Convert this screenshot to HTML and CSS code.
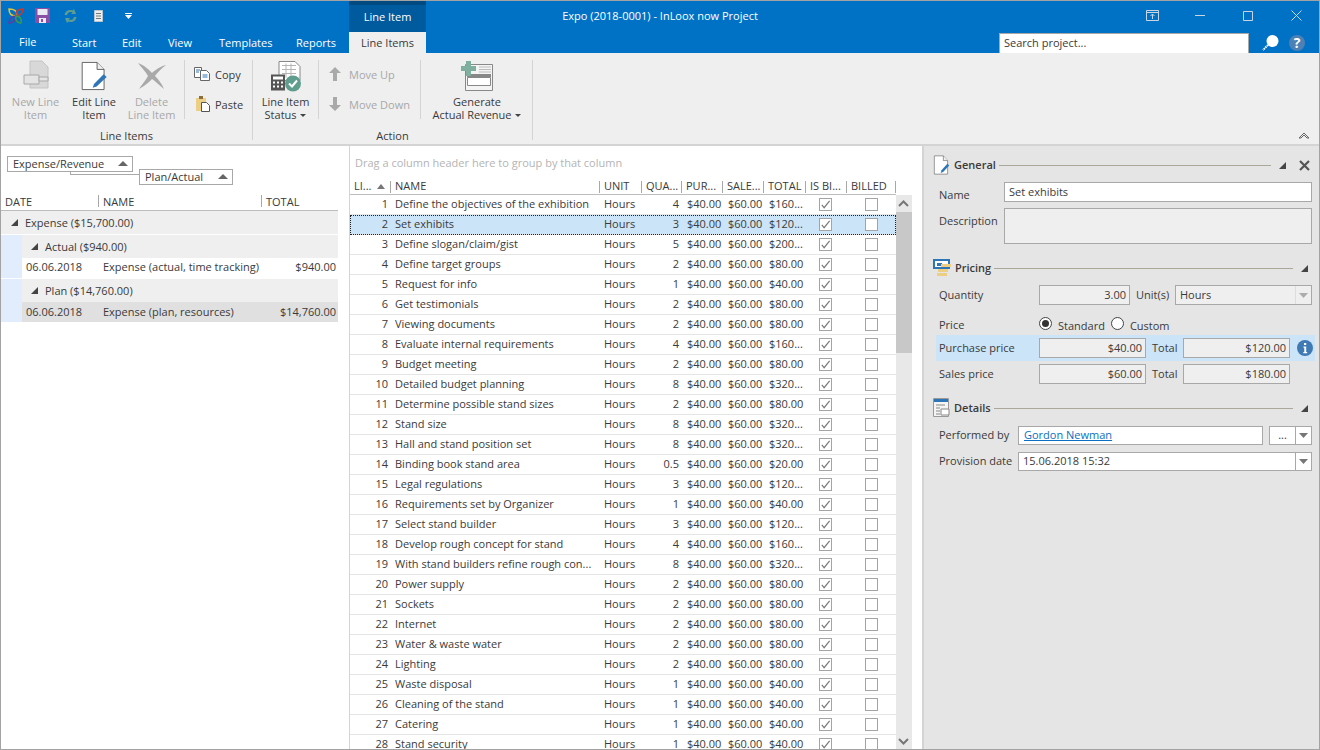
FILE: index.html
```html
<!DOCTYPE html>
<html lang="en">
<head>
<meta charset="utf-8">
<title>Expo (2018-0001) - InLoox now Project</title>
<link rel="stylesheet" href="styles.css">
</head>
<body>
<svg class="defs" width="0" height="0" aria-hidden="true">
  <symbol id="chk" viewBox="0 0 12 12"><path d="M2 6.500l2.500 3L10.500 2" fill="none" stroke="#7a7a7a" stroke-width="1.300"/></symbol>
  <symbol id="tri" viewBox="0 0 7 7"><path d="M7 0v7H0z" fill="#444"/></symbol>
  <symbol id="drop" viewBox="0 0 9 5"><path d="M0 0h9L4.500 5z" fill="#777"/></symbol>
  <symbol id="pageedit" viewBox="0 0 32 34"><path d="M2.500 1.500h17l8 8v23h-25z" fill="#fff" stroke="#555"/><path d="M19.500 1.500v8h8" fill="#eee" stroke="#555"/><path d="M16 26l11-11 3.500 3L19 29l-4.500 1.500z" fill="#2e75b6"/></symbol>
</svg>
<div class="app">
  <header class="chrome">
    <div class="titlerow">
      <div class="qat">
        <svg width="16" height="16" viewBox="0 0 16 16"><path d="M1 1c5 0 9 2 7 7C3 8 1 5 1 1z" fill="none" stroke="#e2c33a" stroke-width="1.500"/><path d="M15 1c-4 0-8 2-7 7 4 0 7-3 7-7z" fill="none" stroke="#c9372c" stroke-width="1.500"/><path d="M1 15c0-4 3-7 7-7 0 4-3 7-7 7z" fill="none" stroke="#5a3f9e" stroke-width="1.500"/><path d="M13 15c-4 0-6-3-5-7 4 0 6 3 5 7z" fill="none" stroke="#3c9a48" stroke-width="1.500"/></svg>
        <svg width="15" height="15" viewBox="0 0 15 15"><path d="M0 0h15v15H0z" fill="#8a4fa5"/><path d="M2.500 1h10v6h-10z" fill="#e9e9f2"/><path d="M4 10h7v5H4z" fill="#e9e9f2"/><path d="M6 11h2v3H6z" fill="#8a4fa5"/></svg>
        <svg width="15" height="16" viewBox="0 0 15 16"><path d="M1.500 7C2 3 6 1 9.500 2.500L11 1l2 5H8l1.500-1.500C7 3.500 4.500 4.500 4 7zM13.500 9c-.5 4-4.500 6-8 4.500L4 15l-2-5h5l-1.500 1.500c2.500 1 5 0 5.500-2.500z" fill="#5f9e8f"/></svg>
        <svg width="17" height="16" viewBox="0 0 17 16"><path d="M4.500 2.500h8v11h-8z" fill="#eee" stroke="#b9c6d2"/><path d="M6 5.500h5M6 8h5M6 10.500h5" stroke="#777"/></svg>
        <svg class="qatmenu" width="7" height="6" viewBox="0 0 7 6"><path d="M0 0h7v1H0zM0 2h7L3.500 6z" fill="#fff"/></svg>
      </div>
      <div class="ctx"><span>Line Item</span></div>
      <div class="title">Expo (2018-0001) - InLoox now Project</div>
      <div class="winbtns">
        <svg width="13" height="11" viewBox="0 0 13 11"><path d="M.5.500h12v10H.5zM.5 2.500h12M6.500 9V4M4.500 6l2-2 2 2" fill="none" stroke="#c9d6e2"/></svg>
        <svg width="10" height="1" viewBox="0 0 10 1"><path d="M0 .5h10" stroke="#c9d6e2"/></svg>
        <svg width="10" height="10" viewBox="0 0 10 10"><path d="M.5.500h9v9h-9z" fill="none" stroke="#c9d6e2"/></svg>
        <svg width="11" height="11" viewBox="0 0 11 11"><path d="M.5.500l10 10M10.500.500l-10 10" stroke="#c9d6e2"/></svg>
      </div>
    </div>
    <nav class="tabrow">
      <span class="tab file">File</span>
      <span class="tab start">Start</span>
      <span class="tab edit">Edit</span>
      <span class="tab view">View</span>
      <span class="tab templates">Templates</span>
      <span class="tab reports">Reports</span>
      <span class="tab active">Line Items</span>
      <div class="search">Search project...</div>
      <svg class="srchicon" width="17" height="17" viewBox="0 0 17 17"><circle cx="10.500" cy="7" r="6" fill="#fff"/><path d="M6 11l-5 5" stroke="#fff" stroke-width="2" stroke-dasharray="1.500 .7"/></svg>
      <span class="help">?</span>
    </nav>
  </header>

  <section class="ribbon">
    <div class="rgroup g1">
      <div class="rbody">
        <div class="bigbtn w-new dis">
          <svg width="26" height="32" viewBox="0 0 26 32"><path d="M7 1h12l6 6v21H7z" fill="#d8d8d8" stroke="#c4c4c4"/><path d="M1 15h15v9H1z" fill="#e4e4e4" stroke="#a8a8a8"/><path d="M16 17h9v4h-9z" fill="#e4e4e4" stroke="#a8a8a8"/></svg>
          <span>New Line<br>Item</span>
        </div>
        <div class="bigbtn w-edit">
          <svg width="28" height="32" viewBox="0 0 32 34"><use href="#pageedit"/></svg>
          <span>Edit Line<br>Item</span>
        </div>
        <div class="bigbtn w-del dis">
          <svg width="30" height="30" viewBox="0 0 30 30"><path d="M1 2c8 3 12 8 14 10C18 9 24 5 29 4c-4 3-9 8-11 11 3 3 7 8 9 13-5-4-9-8-12-10-3 3-7 7-13 10 3-5 7-9 9-13C9 11 4 6 1 2z" fill="#a9a9a9"/></svg>
          <span>Delete<br>Line Item</span>
        </div>
        <div class="rsep first"></div>
        <div class="smallcol copycol">
          <div class="smallbtn">
            <svg width="16" height="14" viewBox="0 0 16 14"><path d="M.5.500h7v10h-7z" fill="#fff" stroke="#666"/><path d="M6.500 3.500h6l3 3v7h-9z" fill="#fff" stroke="#666"/><path d="M8.500 8h5M8.500 10h5" stroke="#2e75b6"/><path d="M2 3h4M2 5h3" stroke="#2e75b6"/></svg>
            <span>Copy</span>
          </div>
          <div class="smallbtn">
            <svg width="14" height="16" viewBox="0 0 14 16" class="pasteicon"><path d="M0 2h10v13H0z" fill="#eccf85"/><path d="M3 0h4v3H3z" fill="#8a6e3c"/><path d="M5.500 6.500h5l3 3v6h-8z" fill="#fff" stroke="#555"/></svg>
            <span>Paste</span>
          </div>
        </div>
      </div>
      <div class="rlabel">Line Items</div>
    </div>
    <div class="rgroup g2">
      <div class="rbody">
        <div class="bigbtn w-status">
          <svg width="32" height="31" viewBox="0 0 32 31"><path d="M9 1h16l5 5v14H9z" fill="#fff" stroke="#888"/><path d="M12 5h14M12 9h14M12 13h14M16 3v14M21 3v14" stroke="#b5b5b5"/><path d="M1 14h14v16H1z" fill="#555"/><path d="M3 16h10v3H3z" fill="#fff"/><path d="M3 21h2v2H3zm4 0h2v2H7zm4 0h2v2h-2zM3 25h2v2H3zm4 0h2v2H7zm4 0h2v2h-2z" fill="#fff"/><circle cx="23" cy="23" r="8" fill="#5f9e8f"/><path d="M19 23l3 3 5-6" fill="none" stroke="#fff" stroke-width="2"/></svg>
          <span>Line Item<br>Status <i class="caret"></i></span>
        </div>
        <div class="rsep second"></div>
        <div class="smallcol movecol dis">
          <div class="smallbtn">
            <svg width="12" height="14" viewBox="0 0 12 14"><path d="M6 0l6 6H8v8H4V6H0z" fill="#a9a9a9"/></svg>
            <span>Move Up</span>
          </div>
          <div class="smallbtn">
            <svg width="12" height="14" viewBox="0 0 12 14"><path d="M6 14L0 8h4V0h4v8h4z" fill="#a9a9a9"/></svg>
            <span>Move Down</span>
          </div>
        </div>
        <div class="rsep third"></div>
        <div class="bigbtn w-gen">
          <svg width="32" height="30" viewBox="0 0 32 30"><path d="M4.500 3.500h27v26h-27z" fill="#f4f4f4" stroke="#888"/><path d="M6 13h24v3H6z" fill="#888"/><path d="M6.500 16.500h23v8h-23z" fill="#fff" stroke="#888"/><path d="M18 6h12M18 8.500h12M18 11h12" stroke="#bbb"/><path d="M5 0h5v5h5v5h-5v5H5v-5H0V5h5z" fill="#7fb09f"/></svg>
          <span>Generate<br>Actual Revenue <i class="caret"></i></span>
        </div>
      </div>
      <div class="rlabel">Action</div>
    </div>
    <svg class="collapse" width="12" height="8" viewBox="0 0 12 8"><path d="M1 7l5-5 5 5-2 0-3-3-3 3z" fill="none" stroke="#666"/></svg>
  </section>

  <main class="work">
    <aside class="left">
      <div class="groupbox">
        <div class="chip c1">Expense/Revenue<i class="up"></i></div>
        <div class="chip c2">Plan/Actual<i class="up"></i></div>
        <div class="link"></div>
      </div>
      <div class="lhead">
        <span class="ld">DATE</span><span class="ln">NAME</span><span class="lt">TOTAL</span>
      </div>
      <div class="lgroup top"><svg width="7" height="7"><use href="#tri"/></svg>Expense ($15,700.00)</div>
      <div class="nest">
        <div class="lgroup sub"><svg width="7" height="7"><use href="#tri"/></svg>Actual ($940.00)</div>
        <div class="lrow"><span class="ld">06.06.2018</span><span class="ln">Expense (actual, time tracking)</span><span class="lt">$940.00</span></div>
      </div>
      <div class="nest second">
        <div class="lgroup sub"><svg width="7" height="7"><use href="#tri"/></svg>Plan ($14,760.00)</div>
        <div class="lrow sel"><span class="ld">06.06.2018</span><span class="ln">Expense (plan, resources)</span><span class="lt">$14,760.00</span></div>
      </div>
    </aside>

    <section class="center">
      <div class="draghint">Drag a column header here to group by that column</div>
      <div class="ghead">
        <span class="cell">LI...<i class="up"></i></span><span class="cell">NAME</span><span class="cell">UNIT</span><span class="cell">QUA...</span><span class="cell">PUR...</span><span class="cell">SALE...</span><span class="cell">TOTAL</span><span class="cell">IS BI...</span><span class="cell">BILLED</span>
      </div>
      <div class="gbody">
        <div class="rows">
          <div class="row"><span class="n">1</span><span>Define the objectives of the exhibition</span><span>Hours</span><span class="r">4</span><span class="m">$40.00</span><span class="m">$60.00</span><span class="m">$160...</span><span class="ck a"><b><svg><use href="#chk"/></svg></b></span><span class="ck z"><b></b></span></div>
          <div class="row cur"><span class="n">2</span><span>Set exhibits</span><span>Hours</span><span class="r">3</span><span class="m">$40.00</span><span class="m">$60.00</span><span class="m">$120...</span><span class="ck a"><b><svg><use href="#chk"/></svg></b></span><span class="ck z"><b></b></span></div>
          <div class="row"><span class="n">3</span><span>Define slogan/claim/gist</span><span>Hours</span><span class="r">5</span><span class="m">$40.00</span><span class="m">$60.00</span><span class="m">$200...</span><span class="ck a"><b><svg><use href="#chk"/></svg></b></span><span class="ck z"><b></b></span></div>
          <div class="row"><span class="n">4</span><span>Define target groups</span><span>Hours</span><span class="r">2</span><span class="m">$40.00</span><span class="m">$60.00</span><span class="m">$80.00</span><span class="ck a"><b><svg><use href="#chk"/></svg></b></span><span class="ck z"><b></b></span></div>
          <div class="row"><span class="n">5</span><span>Request for info</span><span>Hours</span><span class="r">1</span><span class="m">$40.00</span><span class="m">$60.00</span><span class="m">$40.00</span><span class="ck a"><b><svg><use href="#chk"/></svg></b></span><span class="ck z"><b></b></span></div>
          <div class="row"><span class="n">6</span><span>Get testimonials</span><span>Hours</span><span class="r">2</span><span class="m">$40.00</span><span class="m">$60.00</span><span class="m">$80.00</span><span class="ck a"><b><svg><use href="#chk"/></svg></b></span><span class="ck z"><b></b></span></div>
          <div class="row"><span class="n">7</span><span>Viewing documents</span><span>Hours</span><span class="r">2</span><span class="m">$40.00</span><span class="m">$60.00</span><span class="m">$80.00</span><span class="ck a"><b><svg><use href="#chk"/></svg></b></span><span class="ck z"><b></b></span></div>
          <div class="row"><span class="n">8</span><span>Evaluate internal requirements</span><span>Hours</span><span class="r">4</span><span class="m">$40.00</span><span class="m">$60.00</span><span class="m">$160...</span><span class="ck a"><b><svg><use href="#chk"/></svg></b></span><span class="ck z"><b></b></span></div>
          <div class="row"><span class="n">9</span><span>Budget meeting</span><span>Hours</span><span class="r">2</span><span class="m">$40.00</span><span class="m">$60.00</span><span class="m">$80.00</span><span class="ck a"><b><svg><use href="#chk"/></svg></b></span><span class="ck z"><b></b></span></div>
          <div class="row"><span class="n">10</span><span>Detailed budget planning</span><span>Hours</span><span class="r">8</span><span class="m">$40.00</span><span class="m">$60.00</span><span class="m">$320...</span><span class="ck a"><b><svg><use href="#chk"/></svg></b></span><span class="ck z"><b></b></span></div>
          <div class="row"><span class="n">11</span><span>Determine possible stand sizes</span><span>Hours</span><span class="r">2</span><span class="m">$40.00</span><span class="m">$60.00</span><span class="m">$80.00</span><span class="ck a"><b><svg><use href="#chk"/></svg></b></span><span class="ck z"><b></b></span></div>
          <div class="row"><span class="n">12</span><span>Stand size</span><span>Hours</span><span class="r">8</span><span class="m">$40.00</span><span class="m">$60.00</span><span class="m">$320...</span><span class="ck a"><b><svg><use href="#chk"/></svg></b></span><span class="ck z"><b></b></span></div>
          <div class="row"><span class="n">13</span><span>Hall and stand position set</span><span>Hours</span><span class="r">8</span><span class="m">$40.00</span><span class="m">$60.00</span><span class="m">$320...</span><span class="ck a"><b><svg><use href="#chk"/></svg></b></span><span class="ck z"><b></b></span></div>
          <div class="row"><span class="n">14</span><span>Binding book stand area</span><span>Hours</span><span class="r">0.5</span><span class="m">$40.00</span><span class="m">$60.00</span><span class="m">$20.00</span><span class="ck a"><b><svg><use href="#chk"/></svg></b></span><span class="ck z"><b></b></span></div>
          <div class="row"><span class="n">15</span><span>Legal regulations</span><span>Hours</span><span class="r">3</span><span class="m">$40.00</span><span class="m">$60.00</span><span class="m">$120...</span><span class="ck a"><b><svg><use href="#chk"/></svg></b></span><span class="ck z"><b></b></span></div>
          <div class="row"><span class="n">16</span><span>Requirements set by Organizer</span><span>Hours</span><span class="r">1</span><span class="m">$40.00</span><span class="m">$60.00</span><span class="m">$40.00</span><span class="ck a"><b><svg><use href="#chk"/></svg></b></span><span class="ck z"><b></b></span></div>
          <div class="row"><span class="n">17</span><span>Select stand builder</span><span>Hours</span><span class="r">3</span><span class="m">$40.00</span><span class="m">$60.00</span><span class="m">$120...</span><span class="ck a"><b><svg><use href="#chk"/></svg></b></span><span class="ck z"><b></b></span></div>
          <div class="row"><span class="n">18</span><span>Develop rough concept for stand</span><span>Hours</span><span class="r">4</span><span class="m">$40.00</span><span class="m">$60.00</span><span class="m">$160...</span><span class="ck a"><b><svg><use href="#chk"/></svg></b></span><span class="ck z"><b></b></span></div>
          <div class="row"><span class="n">19</span><span>With stand builders refine rough con...</span><span>Hours</span><span class="r">8</span><span class="m">$40.00</span><span class="m">$60.00</span><span class="m">$320...</span><span class="ck a"><b><svg><use href="#chk"/></svg></b></span><span class="ck z"><b></b></span></div>
          <div class="row"><span class="n">20</span><span>Power supply</span><span>Hours</span><span class="r">2</span><span class="m">$40.00</span><span class="m">$60.00</span><span class="m">$80.00</span><span class="ck a"><b><svg><use href="#chk"/></svg></b></span><span class="ck z"><b></b></span></div>
          <div class="row"><span class="n">21</span><span>Sockets</span><span>Hours</span><span class="r">2</span><span class="m">$40.00</span><span class="m">$60.00</span><span class="m">$80.00</span><span class="ck a"><b><svg><use href="#chk"/></svg></b></span><span class="ck z"><b></b></span></div>
          <div class="row"><span class="n">22</span><span>Internet</span><span>Hours</span><span class="r">2</span><span class="m">$40.00</span><span class="m">$60.00</span><span class="m">$80.00</span><span class="ck a"><b><svg><use href="#chk"/></svg></b></span><span class="ck z"><b></b></span></div>
          <div class="row"><span class="n">23</span><span>Water &amp; waste water</span><span>Hours</span><span class="r">2</span><span class="m">$40.00</span><span class="m">$60.00</span><span class="m">$80.00</span><span class="ck a"><b><svg><use href="#chk"/></svg></b></span><span class="ck z"><b></b></span></div>
          <div class="row"><span class="n">24</span><span>Lighting</span><span>Hours</span><span class="r">2</span><span class="m">$40.00</span><span class="m">$60.00</span><span class="m">$80.00</span><span class="ck a"><b><svg><use href="#chk"/></svg></b></span><span class="ck z"><b></b></span></div>
          <div class="row"><span class="n">25</span><span>Waste disposal</span><span>Hours</span><span class="r">1</span><span class="m">$40.00</span><span class="m">$60.00</span><span class="m">$40.00</span><span class="ck a"><b><svg><use href="#chk"/></svg></b></span><span class="ck z"><b></b></span></div>
          <div class="row"><span class="n">26</span><span>Cleaning of the stand</span><span>Hours</span><span class="r">1</span><span class="m">$40.00</span><span class="m">$60.00</span><span class="m">$40.00</span><span class="ck a"><b><svg><use href="#chk"/></svg></b></span><span class="ck z"><b></b></span></div>
          <div class="row"><span class="n">27</span><span>Catering</span><span>Hours</span><span class="r">1</span><span class="m">$40.00</span><span class="m">$60.00</span><span class="m">$40.00</span><span class="ck a"><b><svg><use href="#chk"/></svg></b></span><span class="ck z"><b></b></span></div>
          <div class="row"><span class="n">28</span><span>Stand security</span><span>Hours</span><span class="r">1</span><span class="m">$40.00</span><span class="m">$60.00</span><span class="m">$40.00</span><span class="ck a"><b><svg><use href="#chk"/></svg></b></span><span class="ck z"><b></b></span></div>
        </div>
        <div class="scroll">
          <svg class="sbtn" width="11" height="7" viewBox="0 0 11 7"><path d="M1 6l4.500-4.500L10 6" fill="none" stroke="#777" stroke-width="2"/></svg>
          <div class="thumb"></div>
          <div class="track"></div>
          <svg class="sbtn dn" width="11" height="7" viewBox="0 0 11 7"><path d="M1 1l4.500 4.500L10 1" fill="none" stroke="#777" stroke-width="2"/></svg>
        </div>
      </div>
    </section>

    <aside class="right">
      <div class="sect s-general">
        <svg class="sicon" width="17" height="20" viewBox="0 0 32 34" preserveAspectRatio="none"><use href="#pageedit"/></svg>
        <b>General</b><i class="rule"></i><svg class="strig" width="7" height="7"><use href="#tri"/></svg>
        <svg class="closex" width="11" height="11" viewBox="0 0 11 11"><path d="M1 1l9 9M10 1l-9 9" stroke="#555" stroke-width="2.200"/></svg>
      </div>
      <div class="frow r-name"><label class="lw65">Name</label><div class="field white grow">Set exhibits</div></div>
      <div class="frow r-desc"><label class="lw65">Description</label><div class="field grow tall"></div></div>

      <div class="sect s-pricing">
        <svg class="sicon" width="18" height="20" viewBox="0 0 18 20"><path d="M0 1h17v10H0z" fill="#2e75b6"/><path d="M2 3h13v6H2z" fill="#fff"/><path d="M4 5h5v3H4z" fill="#2e75b6"/><path d="M8 6h10v3H8zM5 11h10v3H5zM4 15h10v3H4z" fill="#eccf85"/></svg>
        <b>Pricing</b><i class="rule"></i><svg class="strig last" width="7" height="7"><use href="#tri"/></svg>
      </div>
      <div class="frow r-qty"><label class="lw100">Quantity</label><div class="field num w91">3.00</div><label class="unit">Unit(s)</label>
        <div class="field grow combo"><span>Hours</span><em class="off"><svg width="9" height="5"><use href="#drop"/></svg></em></div></div>
      <div class="frow r-price"><label class="lw100">Price</label>
        <i class="radio on"></i><span class="rlab">Standard</span><i class="radio"></i><span>Custom</span></div>
      <div class="frow r-amt hl"><label class="lw100">Purchase price</label><div class="field num w107">$40.00</div><label class="tot">Total</label><div class="field num w107">$120.00</div>
        <svg class="info" width="16" height="16" viewBox="0 0 16 16"><circle cx="8" cy="8" r="8" fill="#3f7ab5"/><path d="M7 3h2.200v2H7zM6.500 6.500H9.200V12h1v1.200H6.300V12h1V7.700h-.8z" fill="#fff"/></svg></div>
      <div class="frow r-amt sales"><label class="lw100">Sales price</label><div class="field num w107">$60.00</div><label class="tot">Total</label><div class="field num w107">$180.00</div></div>

      <div class="sect s-details">
        <svg class="sicon" width="17" height="20" viewBox="0 0 17 20"><path d="M.5.500h15v18H.500z" fill="#f4f4f4" stroke="#999"/><path d="M1 1h14v3H1z" fill="#2e75b6"/><path d="M3 7h9M3 10h4M3 13h4M3 16h4" stroke="#888"/><path d="M8 11h8v6H8z" fill="#fff" stroke="#888"/></svg>
        <b>Details</b><i class="rule"></i><svg class="strig last" width="7" height="7"><use href="#tri"/></svg>
      </div>
      <div class="frow r-perf"><label class="lw79">Performed by</label><div class="field white w245"><a href="#">Gordon Newman</a></div>
        <div class="field white combo more"><span>...</span><em><svg width="9" height="5"><use href="#drop"/></svg></em></div></div>
      <div class="frow r-prov"><label class="lw79">Provision date</label><div class="field white grow combo"><span>15.06.2018 15:32</span><em><svg width="9" height="5"><use href="#drop"/></svg></em></div></div>
    </aside>
  </main>
</div>
</body>
</html>
```
FILE: styles.css
```css
* { box-sizing: border-box; }
html, body { margin: 0; padding: 0; height: 100%; overflow: hidden; }
body { font: 11px/15px "Open Sans", "Liberation Sans", sans-serif; color: #3a3a3a; background: #fff; }
.defs { position: absolute; }
i, em { font-style: normal; }
svg { display: block; flex: none; }

.app { width: 1320px; height: 750px; display: flex; flex-direction: column; border: 1px solid #a3a3a3; overflow: hidden; }

/* title area */
.chrome { background: #0072c6; height: 52px; flex: none; color: #fff; }
.titlerow { height: 31px; display: flex; }
.qat { width: 348px; flex: none; display: flex; align-items: center; padding: 0 0 2px 7px; }
.qat svg:nth-child(2) { margin-left: 11px; }
.qat svg:nth-child(3) { margin-left: 13px; }
.qat svg:nth-child(4) { margin-left: 12px; }
.qat svg.qatmenu { margin-left: 18px; }
.ctx { width: 77px; flex: none; background: #005a9e; border-top: 4px solid #004a82; text-align: center; padding-top: 4px; }
.title { width: 640px; flex: none; padding: 7px 172px 0 0; text-align: center; }
.winbtns { flex: 1; display: flex; align-items: center; padding: 0 0 2px 80px; }
.winbtns svg:nth-child(2) { margin-left: 36px; }
.winbtns svg:nth-child(3) { margin-left: 38px; }
.winbtns svg:nth-child(4) { margin-left: 38px; }

.tabrow { height: 21px; display: flex; align-items: flex-end; }
.tab { height: 21px; line-height: 21px; flex: none; }
.file { margin-left: 18px; width: 53px; line-height: 20px; }
.start { width: 50px; }
.edit { width: 46px; }
.view { width: 51px; }
.templates { width: 77px; }
.reports { width: 53px; }
.active { width: 77px; background: #efefef; color: #3a3a3a; text-align: center; }
.search { margin-left: 573px; width: 250px; flex: none; height: 20px; background: #fff; color: #3a3a3a; border: 1px solid #a8a8a8; border-bottom: 0; padding: 1px 0 0 4px; }
.srchicon { margin: 0 0 2px 13px; }
.help { margin: 0 0 2px 10px; width: 16px; height: 16px; flex: none; border-radius: 50%; background: #4d81b5; font: bold 14px/16px "Open Sans", sans-serif; text-align: center; }

/* ribbon */
.ribbon { height: 93px; flex: none; background: #efefef; border-bottom: 2px solid #d4d4d4; display: flex; position: relative; }
.rgroup { display: flex; flex-direction: column; border-right: 1px solid #d4d4d4; height: 80px; margin-top: 7px; flex: none; }
.g1 { width: 252px; }
.g2 { width: 280px; }
.rbody { height: 64px; flex: none; display: flex; }
.rlabel { height: 16px; text-align: center; line-height: 24px; }
.bigbtn { display: flex; flex-direction: column; align-items: center; text-align: center; line-height: 13px; flex: none; }
.bigbtn svg { height: 32px; }
.bigbtn span { margin-top: 3px; white-space: nowrap; }
.w-new { width: 68px; padding-left: 1px; }
.w-edit { width: 50px; }
.w-del { width: 65px; }
.dis, .dis span { color: #a8a8a8; }
.rsep { width: 1px; height: 59px; background: #d4d4d4; flex: none; }
.smallcol { display: flex; flex-direction: column; padding-top: 6px; gap: 14px; flex: none; }
.smallbtn { height: 16px; display: flex; align-items: center; }
.copycol { padding-left: 9px; }
.copycol span { margin-left: 5px; }
.pasteicon { margin-left: 2px; }
.w-status { width: 65px; }
.second { margin-right: 10px; }
.movecol { width: 91px; }
.movecol span { margin-left: 8px; }
.w-gen { width: 112px; }
.caret { display: inline-block; width: 0; height: 0; border: 3px solid transparent; border-top-color: #444; border-bottom: 0; vertical-align: 2px; margin-left: 1px; }
.collapse { position: absolute; right: 9px; bottom: 5px; }

/* work area */
.work { flex: 1; display: flex; min-height: 0; }
.left { width: 349px; border-right: 1px solid #d4d4d4; flex: none; background: #fff; }
.groupbox { height: 48px; position: relative; display: flex; padding: 10px 0 0 6px; align-items: flex-start; }
.chip { border: 1px solid #a8a8a8; height: 16px; line-height: 14px; padding-left: 5px; background: #fff; position: relative; z-index: 1; flex: none; }
.c1 { width: 126px; }
.c2 { width: 94px; margin: 13px 0 0 6px; }
.up { display: inline-block; width: 0; height: 0; border-style: solid; border-color: transparent; border-width: 0 5px 5px; border-bottom-color: #666; }
.chip .up { position: absolute; right: 4px; top: 4px; }
.link { position: absolute; left: 69px; top: 24px; width: 70px; height: 5px; border-left: 1px solid #a8a8a8; border-bottom: 1px solid #a8a8a8; }
.lhead { width: 337px; height: 17px; display: flex; border-bottom: 1px solid #bdbdbd; }
.lhead span { border-left: 1px solid #a8a8a8; height: 12px; line-height: 13px; margin-top: 1px; }
.lhead .ld { width: 93px; padding-left: 4px; border-left: 0; }
.lhead .ln { margin-left: 4px; width: 163px; padding-left: 4px; }
.lhead .lt { padding-left: 4px; }
.lgroup { display: flex; align-items: center; width: 337px; background: #efefef; }
.top { height: 23px; padding-left: 10px; margin-bottom: 1px; }
.top svg { margin-right: 7px; }
.nest { padding-left: 21px; background: #e1edfc; width: 337px; }
.nest.second { margin-top: 1px; }
.sub { width: 316px; height: 23px; padding-left: 9px; }
.sub svg { margin-right: 7px; }
.lrow { display: flex; background: #fff; width: 316px; height: 20px; line-height: 18px; }
.lrow .ld { width: 81px; padding-left: 4px; }
.lrow .ln { width: 170px; white-space: nowrap; }
.lrow .lt { flex: 1; text-align: right; padding-right: 2px; }
.lrow.sel { background: #e0e0e0; line-height: 20px; }

.center { width: 574px; flex: none; background: #fff; border-right: 2px solid #d4d4d4; display: flex; flex-direction: column; min-height: 0; }
.draghint { height: 32px; padding: 9px 0 0 5px; color: #b4b4b4; flex: none; }
.ghead { flex: none; height: 17px; width: 546px; display: grid; grid-template-columns: 41px 209px 42px 40px 41px 41px 42px 41px 49px; border-bottom: 1px solid #bdbdbd; line-height: 9px; }
.cell { height: 12px; margin-top: 3px; padding-left: 4px; border-right: 1px solid #a8a8a8; position: relative; white-space: nowrap; }
.cell .up { position: absolute; right: 5px; top: 3px; border-width: 0 4px 5px; border-bottom-color: #777; }
.gbody { flex: 1; display: flex; min-height: 0; overflow: hidden; }
.rows { width: 546px; flex: none; }
.row { height: 20px; display: grid; grid-template-columns: 41px 209px 42px 40px 41px 41px 42px 41px 49px; border-bottom: 1px solid #e5e5e5; line-height: 18px; white-space: nowrap; }
.row > span { padding-left: 4px; }
.row > .n { text-align: right; padding: 0 3px 0 0; }
.row > .r { text-align: right; padding: 0 3px 0 0; }
.row > .m { padding-left: 5px; }
.row > .a { padding-left: 13px; }
.row > .z { padding-left: 18px; }
.row .ck b { display: block; width: 13px; height: 13px; margin-top: 3px; border: 1px solid #a4a4a4; background: #fff; }
.row .ck svg { width: 11px; height: 11px; }
.cur { background: #cce4f7; outline: 1px dotted #222; outline-offset: -1px; }
.scroll { width: 16px; flex: none; background: #e8e8e8; display: flex; flex-direction: column; }
.sbtn { flex: none; margin: 5px 2px; }
.thumb { height: 141px; background: #c8c8c8; flex: none; }
.track { flex: 1; }
.dn { margin-bottom: 4px; }

/* details pane */
.right { flex: 1; background: #e5e5e5; min-width: 0; }
.sect { display: flex; align-items: center; height: 20px; padding-left: 9px; }
.sect b { font-weight: 600; margin: -2px 0 0 4px; }
.rule { flex: 1; height: 1px; background: #aca899; margin-left: 3px; }
.strig { margin-left: 8px; }
.strig.last { margin-right: 11px; }
.closex { margin: 0 9px 0 13px; }
.s-general { margin-top: 9px; }
.s-pricing { margin-top: 14px; }
.s-details { margin-top: 11px; }
.frow { display: flex; align-items: center; padding-left: 15px; }
.frow label { margin-top: -2px; }
.lw65 { width: 65px; flex: none; }
.lw100 { width: 100px; flex: none; }
.lw79 { width: 79px; flex: none; }
.field { border: 1px solid #a8a8a8; height: 20px; line-height: 17px; padding: 0 3px 0 4px; background: #efefef; white-space: nowrap; flex: none; }
.white { background: #fff; }
.grow { width: 308px; }
.r-name { margin-top: 7px; align-items: flex-start; }
.r-name label { margin-top: 5px; }
.r-desc { margin-top: 6px; align-items: flex-start; }
.r-desc label { margin-top: 5px; }
.tall { height: 36px; }
.r-qty { margin-top: 7px; }
.num { text-align: right; }
.w91 { width: 91px; }
.w107 { width: 107px; }
.w245 { width: 245px; padding-left: 5px; }
.unit { width: 39px; margin-left: 6px; flex: none; }
.r-qty .grow { width: 137px; }
.combo { display: flex; padding: 0; }
.combo span { flex: 1; padding-left: 4px; }
.combo em { width: 16px; border-left: 1px solid #a8a8a8; display: flex; align-items: center; justify-content: center; }
.combo em.off { border-left-color: #cfcfcf; opacity: .55; }
.r-price { margin-top: 10px; height: 20px; }
.radio { width: 13px; height: 13px; border: 1px solid #444; border-radius: 50%; background: #fff; flex: none; margin: -3px 6px 0 0; position: relative; }
.radio.on::after { content: ""; position: absolute; left: 2px; top: 2px; width: 7px; height: 7px; border-radius: 50%; background: #333; }
.rlab { margin-right: 6px; }
.r-amt { height: 26px; margin-left: 12px; padding-left: 3px; width: 379px; }
.hl { background: #cce4f7; }
.tot { width: 31px; margin-left: 6px; flex: none; }
.info { margin-left: 7px; }
.r-perf { margin-top: 8px; }
.r-prov { margin-top: 7px; }
.r-perf .field, .r-prov .field { height: 19px; line-height: 15px; }
.r-perf label, .r-prov label { margin-top: -3px; }
.r-prov .grow { width: 294px; }
.more { width: 43px; margin-left: 6px; }
.more span { text-align: center; padding: 0; }
a { color: #0a6fc2; }
```
